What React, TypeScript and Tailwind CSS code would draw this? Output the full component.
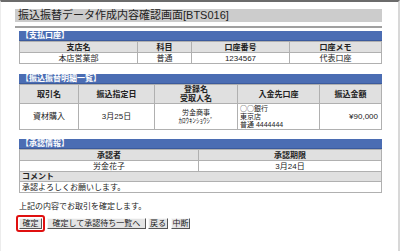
import React from 'react';

const font = { fontFamily: '"Liberation Sans", "Noto Sans CJK JP", sans-serif' };

const SectionBar: React.FC<{ title: string }> = ({ title }) => (
  <div className="h-[10px] bg-[#4b6db3] text-white text-[8px] leading-[10px] font-bold pl-[2px] border-b border-[#3b5a9c]">
    {title}
  </div>
);

const th = 'bg-[#e0e0e0] border border-[#b0b0b0] font-bold text-center text-[8px] leading-[9px] p-0';
const td = 'bg-white border border-[#b0b0b0] text-center text-[8px] leading-[9px] p-0';

const App: React.FC = () => {
  return (
    <div
      className="w-[400px] h-[251px] bg-white border-t-2 border-t-[#6b6b6b] border-r-2 border-r-[#d8d8d8] border-l border-l-[#ececec] text-[#222] overflow-hidden"
      style={font}
    >
      <div className="ml-[14px] w-[367px] mt-[7px] h-[13px] bg-[#cccccc] text-[11px] leading-[13px] pl-[3px] text-[#222]">
        振込振替データ作成内容確認画面[BTS016]
      </div>
      <div className="ml-[14px] w-[367px] mt-[4px] h-[2px] bg-[#a0a0a0]" />

      {/* 支払口座 */}
      <div className="ml-[18px] w-[363px] mt-[3px]">
        <SectionBar title="【支払口座】" />
        <table className="w-full table-fixed border-collapse">
          <colgroup>
            <col className="w-[118px]" />
            <col className="w-[54px]" />
            <col className="w-[98px]" />
            <col />
          </colgroup>
          <tbody>
            <tr className="h-[11px]">
              <th className={th}>支店名</th>
              <th className={th}>科目</th>
              <th className={th}>口座番号</th>
              <th className={th}>口座メモ</th>
            </tr>
            <tr className="h-[11px]">
              <td className={td}>本店営業部</td>
              <td className={td}>普通</td>
              <td className={td}>1234567</td>
              <td className={td}>代表口座</td>
            </tr>
          </tbody>
        </table>
      </div>

      {/* 振込振替明細一覧 */}
      <div className="ml-[18px] w-[363px] mt-[10px]">
        <SectionBar title="【振込振替明細一覧】" />
        <table className="w-full table-fixed border-collapse">
          <colgroup>
            <col className="w-[59px]" />
            <col className="w-[76px]" />
            <col className="w-[83px]" />
            <col className="w-[82px]" />
            <col />
          </colgroup>
          <tbody>
            <tr className="h-[18px]">
              <th className={th}>取引名</th>
              <th className={th}>振込指定日</th>
              <th className={th}>登録名<br />受取人名</th>
              <th className={th}>入金先口座</th>
              <th className={th}>振込金額</th>
            </tr>
            <tr className="h-[25px]">
              <td className={td}>資材購入</td>
              <td className={td}>3月25日</td>
              <td className={`${td} !text-[7px] !leading-[8px]`}>労金商事<br />ｶﾛｳｷﾝｼｮｳｼﾞ</td>
              <td className={`${td} !text-left pl-[2px] !text-[7px] !leading-[8px]`}>
                <span className="font-['Noto_Sans_CJK_JP']">○○</span>銀行<br />東京店<br />普通 4444444
              </td>
              <td className={`${td} !text-right pr-[3px]`}>¥90,000</td>
            </tr>
          </tbody>
        </table>
      </div>

      {/* 承認情報 */}
      <div className="ml-[18px] w-[363px] mt-[9px]">
        <SectionBar title="【承認情報】" />
        <table className="w-full table-fixed border-collapse">
          <colgroup>
            <col className="w-[179px]" />
            <col />
          </colgroup>
          <tbody>
            <tr className="h-[11px]">
              <th className={th}>承認者</th>
              <th className={th}>承認期限</th>
            </tr>
            <tr className="h-[11px]">
              <td className={td}>労金花子</td>
              <td className={td}>3月24日</td>
            </tr>
            <tr className="h-[10px]">
              <th colSpan={2} className={`${th} !text-left pl-[2px]`}>コメント</th>
            </tr>
            <tr className="h-[11px]">
              <td colSpan={2} className={`${td} !text-left pl-[2px]`}>承認よろしくお願いします。</td>
            </tr>
          </tbody>
        </table>
      </div>

      <p className="ml-[18px] mt-[9px] text-[8px] leading-[10px]">上記の内容でお取引を確定します。</p>

      <div className="ml-[15px] mt-[3px] flex items-center gap-[2px] text-[8px] leading-[10px]">
        <div className="border-2 border-[#e01010] rounded-[3px] p-[1px]">
          <button className="w-[23px] h-[11px] bg-[#e4e4e4] border border-[#f8f8f8] border-r-[#555] border-b-[#555] leading-[9px]">確定</button>
        </div>
        <button className="w-[99px] h-[11px] bg-[#e4e4e4] border border-[#f8f8f8] border-r-[#555] border-b-[#555] leading-[9px]">確定して承認待ち一覧へ</button>
        <button className="w-[20px] h-[11px] bg-[#e4e4e4] border border-[#f8f8f8] border-r-[#555] border-b-[#555] leading-[9px]">戻る</button>
        <button className="w-[19px] h-[11px] ml-[1px] bg-[#e4e4e4] border border-[#f8f8f8] border-r-[#555] border-b-[#555] leading-[9px]">中断</button>
      </div>
    </div>
  );
};

export default App;
